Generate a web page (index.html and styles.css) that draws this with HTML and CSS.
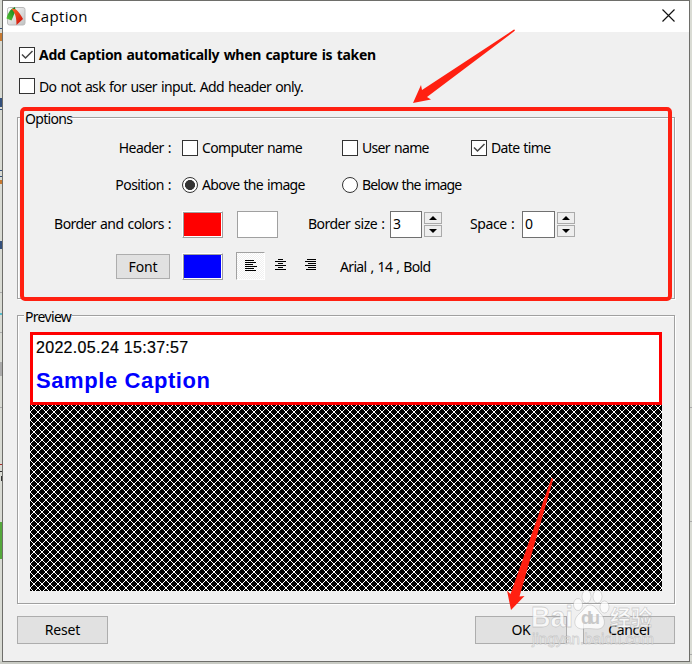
FILE: index.html
```html
<!DOCTYPE html>
<html lang="en">
<head>
<meta charset="utf-8">
<title>Caption</title>
<link rel="stylesheet" href="styles.css">
</head>
<body>
<svg class="backdrop" width="692" height="664" shape-rendering="crispEdges">
  <path fill="#d9dbd4" d="M0 0h3v664H0zM690 0h2v664h-2z"/>
  <path fill="#c9cbc4" d="M0 661h692v3H0z"/>
  <path fill="#55a83c" d="M0 522h3v37H0z"/>
  <path fill="#34507c" d="M0 28h3v1H0zM0 98h2v9H0zM0 109h3v1H0zM0 170h3v1H0zM0 176h3v1H0zM0 241h2v8H0z"/>
  <path fill="#c77931" d="M0 33h2v8H0zM0 180h2v4H0z"/>
  <path fill="#55bccb" d="M0 313h2v2H0z"/>
  <path fill="#a82b2b" d="M0 464h3v1H0z"/>
  <path fill="#333" d="M0 471h3v1H0zM1 476h2v5H1z"/>
  <path fill="#aaa" d="M0 292h3v1H0zM0 332h3v1H0zM0 362h2v14H0zM0 407h3v1H0zM690 407h2v1h-2zM690 521h2v1h-2zM690 654h2v1h-2z"/>
</svg>
<main class="dialog">
  <header class="titlebar">
    <svg class="logo" width="20" height="20" viewBox="0 0 20 20">
      <defs><linearGradient id="tile" x2="1" y2="1"><stop stop-color="#fff"/><stop offset="1" stop-color="#c0c0c0"/></linearGradient>
      <linearGradient id="leaf" x1="1" x2="0" y2="1"><stop stop-color="#087d19"/><stop offset="1" stop-color="#5cc638"/></linearGradient>
      <linearGradient id="flame" x2="1" y2="1"><stop stop-color="#ff6a22"/><stop offset="1" stop-color="#c8080c"/></linearGradient></defs>
      <rect x="1.500" y="1.500" width="17.500" height="17.500" rx="2" fill="url(#tile)" stroke="#bbb"/>
      <path d="M9 1C4 3 1.500 8 .5 12.500l5 2L9.500 5z" fill="url(#leaf)"/>
      <path d="M5.500 3C10 1.500 14 7 17 13L10.500 19C10.500 12 9.500 7 5.500 3z" fill="url(#flame)"/>
    </svg>
    <h1 class="title">Caption</h1>
    <svg class="close" width="13" height="13" viewBox="0 0 13 13"><path d="M.5.5l12 12M12.500.5l-12 12" stroke="#111" stroke-width="1.150"/></svg>
  </header>

  <div class="auto"><span class="check"><svg width="14" height="14"><path d="M2 6.500l3.500 3.500 7-7" fill="none" stroke="#444" stroke-width="1.500"/></svg></span><b class="auto-text">Add Caption automatically when capture is taken</b></div>
  <div class="noask"><span class="check"></span><span class="noask-text">Do not ask for user input. Add header only.</span></div>

  <section class="group options">
    <h2 class="legend">Options</h2>
    <div class="row header-row">
      <span class="label">Header :</span>
      <div class="choice c1"><span class="check"></span><span>Computer name</span></div>
      <div class="choice c2"><span class="check"></span><span>User name</span></div>
      <div class="choice"><span class="check"><svg width="14" height="14"><path d="M2 6.500l3.500 3.500 7-7" fill="none" stroke="#444" stroke-width="1.500"/></svg></span><span>Date time</span></div>
    </div>
    <div class="row position-row">
      <span class="label">Position :</span>
      <div class="choice c1"><span class="radio on"></span><span>Above the image</span></div>
      <div class="choice"><span class="radio"></span><span class="below">Below the image</span></div>
    </div>
    <div class="row color-row">
      <span class="label">Border and colors :</span>
      <span class="swatch red"></span>
      <span class="swatch white"></span>
      <span class="size-label">Border size :</span>
      <span class="field">3</span>
      <span class="spin"><i><svg width="8" height="4"><path d="M0 4L4 0l4 4z"/></svg></i><i><svg width="8" height="4"><path d="M0 0l4 4 4-4z"/></svg></i></span>
      <span class="space-label">Space :</span>
      <span class="field wide">0</span>
      <span class="spin"><i><svg width="8" height="4"><path d="M0 4L4 0l4 4z"/></svg></i><i><svg width="8" height="4"><path d="M0 0l4 4 4-4z"/></svg></i></span>
    </div>
    <div class="row font-row">
      <span class="button font-button">Font</span>
      <span class="swatch blue"></span>
      <span class="align pressed"><svg width="12" height="12" shape-rendering="crispEdges"><path d="M0 0h9v1H0zM0 2h11v1H0zM0 4h8v1H0zM0 6h12v1H0zM0 8h9v1H0zM0 10h11v1H0z"/></svg></span>
      <span class="align center"><svg width="12" height="12" shape-rendering="crispEdges"><path d="M3 0h5v1H3zM0 2h11v1H0zM3 4h5v1H3zM0 6h11v1H0zM3 8h5v1H3zM0 10h11v1H0z"/></svg></span>
      <span class="align right"><svg width="12" height="12" shape-rendering="crispEdges"><path d="M2 0h9v1H2zM0 2h11v1H0zM3 4h8v1H3zM0 6h11v1H0zM3 8h8v1H3zM1 10h10v1H1z"/></svg></span>
      <span class="font-name">Arial , 14 , Bold</span>
    </div>
  </section>

  <section class="group preview">
    <h2 class="legend">Preview</h2>
    <div class="caption-box">
      <p class="stamp">2022.05.24 15:37:57</p>
      <p class="sample">Sample Caption</p>
    </div>
    <svg class="hatch" width="632" height="186" shape-rendering="crispEdges">
      <defs><pattern id="cross" y="-1" width="8" height="8" patternUnits="userSpaceOnUse"><path fill="#fff" d="M0 0h1v1H0zM1 1h1v1H1zM2 2h1v1H2zM3 3h1v1H3zM4 4h1v1H4zM5 5h1v1H5zM6 6h1v1H6zM7 7h1v1H7zM7 0h1v1H7zM6 1h1v1H6zM5 2h1v1H5zM4 3h1v1H4zM3 4h1v1H3zM2 5h1v1H2zM1 6h1v1H1zM0 7h1v1H0z"/></pattern></defs>
      <rect width="632" height="186"/><rect width="632" height="186" fill="url(#cross)"/>
    </svg>
  </section>

  <footer class="actions"><span class="button reset">Reset</span><span class="button ok">OK</span><span class="button cancel">Cancel</span></footer>
</main>

<div class="highlight"></div>
<svg class="arrows" width="692" height="664" fill="#ff2011">
  <path d="M514 29.500Q515.500 30 514.500 31L427 97l4 2.500-18 3.500 8-18 1 5z"/>
  <path d="M551.500 478q1.500 0 1.500 2L519.500 596.500l5-.5-13.500 14-4-19.500 3.500 3.500z"/>
</svg>
<svg class="watermark" width="140" height="70" viewBox="530 588 140 70">
  <g fill="#fff" fill-opacity=".75" stroke="#888" stroke-opacity=".35" stroke-width=".8">
    <text x="531" y="627" class="wm-brand" textLength="42" lengthAdjust="spacingAndGlyphs">Bai</text>
    <ellipse cx="578" cy="604.500" rx="4.500" ry="6"/><ellipse cx="586.500" cy="596.500" rx="4.500" ry="6.500"/><ellipse cx="597.500" cy="596.500" rx="4.500" ry="6.500"/><ellipse cx="604.500" cy="607" rx="4.500" ry="6"/>
    <path d="M590 605c5 0 7 5 11 9s6 14-3 15c-5 0-11-1-16 0-10-1-8-11-3-15s6-9 11-9z"/>
    <text x="610" y="625" class="wm-cn" textLength="42">经验</text>
    <text x="532" y="644" class="wm-url" textLength="122">jingyan.baidu.com</text>
  </g>
  <text x="581" y="624" class="wm-du" textLength="19">du</text>
</svg>
</body>
</html>
```

FILE: styles.css
```css
* { box-sizing: border-box; }
body { margin: 0; width: 692px; height: 664px; overflow: hidden; position: relative; background: #d9dbd4; color: #000; font: 14px/18px "Noto Sans", sans-serif; letter-spacing: -.66px; word-spacing: 1px; white-space: nowrap; }
h1, h2, p { margin: 0; font-weight: 400; }
svg { display: block; flex: none; }
.backdrop, .arrows { position: absolute; left: 0; top: 0; }
.dialog { position: relative; width: 688px; height: 662px; margin-left: 2px; background: #f0f0f0; border: 1px solid #6e6e6a; }
.titlebar { height: 31px; background: #fff; display: flex; align-items: center; padding: 0 14px 2px 3px; }
.title { font: 15px/20px "Open Sans", sans-serif; letter-spacing: .35px; margin-left: 5px; }
.close { margin-left: auto; }
.auto, .noask, .choice { display: flex; align-items: center; gap: 4px; }
.auto { margin: 14px 0 0 16px; height: 18px; letter-spacing: -.29px; }
.noask { margin: 13px 0 0 16px; height: 18px; }
.noask-text { padding-top: 1px; letter-spacing: -.61px; }
.check { width: 16px; height: 16px; border: 1px solid #333; background: #fff; flex: none; }
.radio { width: 16px; height: 16px; border: 1px solid #333; border-radius: 50%; background: #fff; flex: none; }
.radio.on { background: radial-gradient(circle, #333 0 4.700px, #fff 5.300px); }
.below { letter-spacing: -.82px; }
.group { width: 658px; margin-left: 14px; border: 1px solid #a0a0a0; box-shadow: 1px 1px #fff, inset 1px 1px #fff; }
.legend { width: 48px; height: 18px; margin: -9px 0 0 6px; padding-left: 1px; background: #f0f0f0; font-size: 14px; line-height: 20px; letter-spacing: -.68px; }
.options { height: 182px; margin-top: 22px; }
.row { display: flex; align-items: center; }
.label { width: 153px; text-align: right; margin-right: 11px; letter-spacing: -.58px; }
.header-row { height: 18px; margin-top: 12px; }
.position-row { height: 18px; margin-top: 19px; }
.c1 { width: 160px; }
.c2 { width: 129px; }
.color-row { height: 28px; margin-top: 16px; }
.swatch { width: 41px; height: 27px; flex: none; border: 1px solid #a0a0a0; box-shadow: inset 0 0 0 1px #fff; }
.red, .blue { border-color: #fff #a0a0a0 #a0a0a0 #fff; box-shadow: inset 1px 1px #a0a0a0, inset -1px -1px #fff; }
.red { background: #f00; }
.blue { background: #00f; }
.white { background: #fff; margin-left: 14px; }
.size-label { width: 75px; margin-left: 30px; letter-spacing: -.52px; }
.field { width: 32px; height: 27px; border: 1px solid #707070; background: #fff; padding: 3px 0 0 2px; margin-left: 7px; }
.wide { width: 33px; margin-left: 5px; }
.spin { width: 18px; display: grid; gap: 1px; margin-left: 2px; }
.spin i { height: 12px; border: 1px solid #aaa; background: #eee; display: grid; place-items: center; }
.space-label { width: 47px; margin-left: 28px; letter-spacing: -.4px; }
.font-row { height: 28px; margin-top: 14px; }
.button { display: flex; align-items: center; justify-content: center; border: 1px solid #adadad; background: #e1e1e1; }
.font-button { width: 54px; height: 25px; margin: 1px 12px 0 98px; letter-spacing: -.1px; }
.align { width: 29px; height: 28px; display: flex; align-items: center; justify-content: center; padding-bottom: 2px; }
.pressed { margin-left: 13px; padding-bottom: 0; border: 1px solid #fff; border-top-color: #a0a0a0; border-left-color: #a0a0a0; background: repeating-conic-gradient(#f0f0f0 0 25%, #fff 0 50%) 0 0/2px 2px; }
.center { margin-left: 1px; }
.right { margin-left: 1px; }
.font-name { margin: 2px 0 0 15px; }
.preview { height: 289px; margin-top: 16px; }
.caption-box { width: 632px; height: 73px; margin: 7px 0 0 12px; border: 3px solid #f00; background: #fff; padding: 4px 0 0 3px; font-family: "Liberation Sans", Arial, sans-serif; word-spacing: 0; }
.stamp { font-size: 16px; line-height: 18px; letter-spacing: .3px; -webkit-text-stroke: .2px #000; }
.sample { font-size: 22px; line-height: 26px; color: #00f; letter-spacing: .6px; font-weight: 700; margin-top: 11px; }
.hatch { margin-left: 12px; }
.actions { display: flex; margin: 12px 14px 0; }
.reset, .ok, .cancel { height: 28px; width: 91px; letter-spacing: -.2px; }
.ok { margin-left: 367px; width: 92px; }
.cancel { margin-left: 16px; width: 92px; letter-spacing: -.35px; }
.highlight { position: absolute; left: 20px; top: 107px; width: 652px; height: 194px; border: 4px solid #ff2011; border-radius: 5px; }
.watermark { position: absolute; left: 530px; top: 588px; letter-spacing: 0; word-spacing: 0; }
.wm-brand { font: 700 29px "Liberation Sans", sans-serif; }
.wm-cn { font: 700 21px "Noto Sans CJK SC", sans-serif; }
.wm-url { font: 15px "Liberation Sans", sans-serif; }
.wm-du { font: 700 18px "Liberation Sans", sans-serif; fill: #c8c8c8; }
```
